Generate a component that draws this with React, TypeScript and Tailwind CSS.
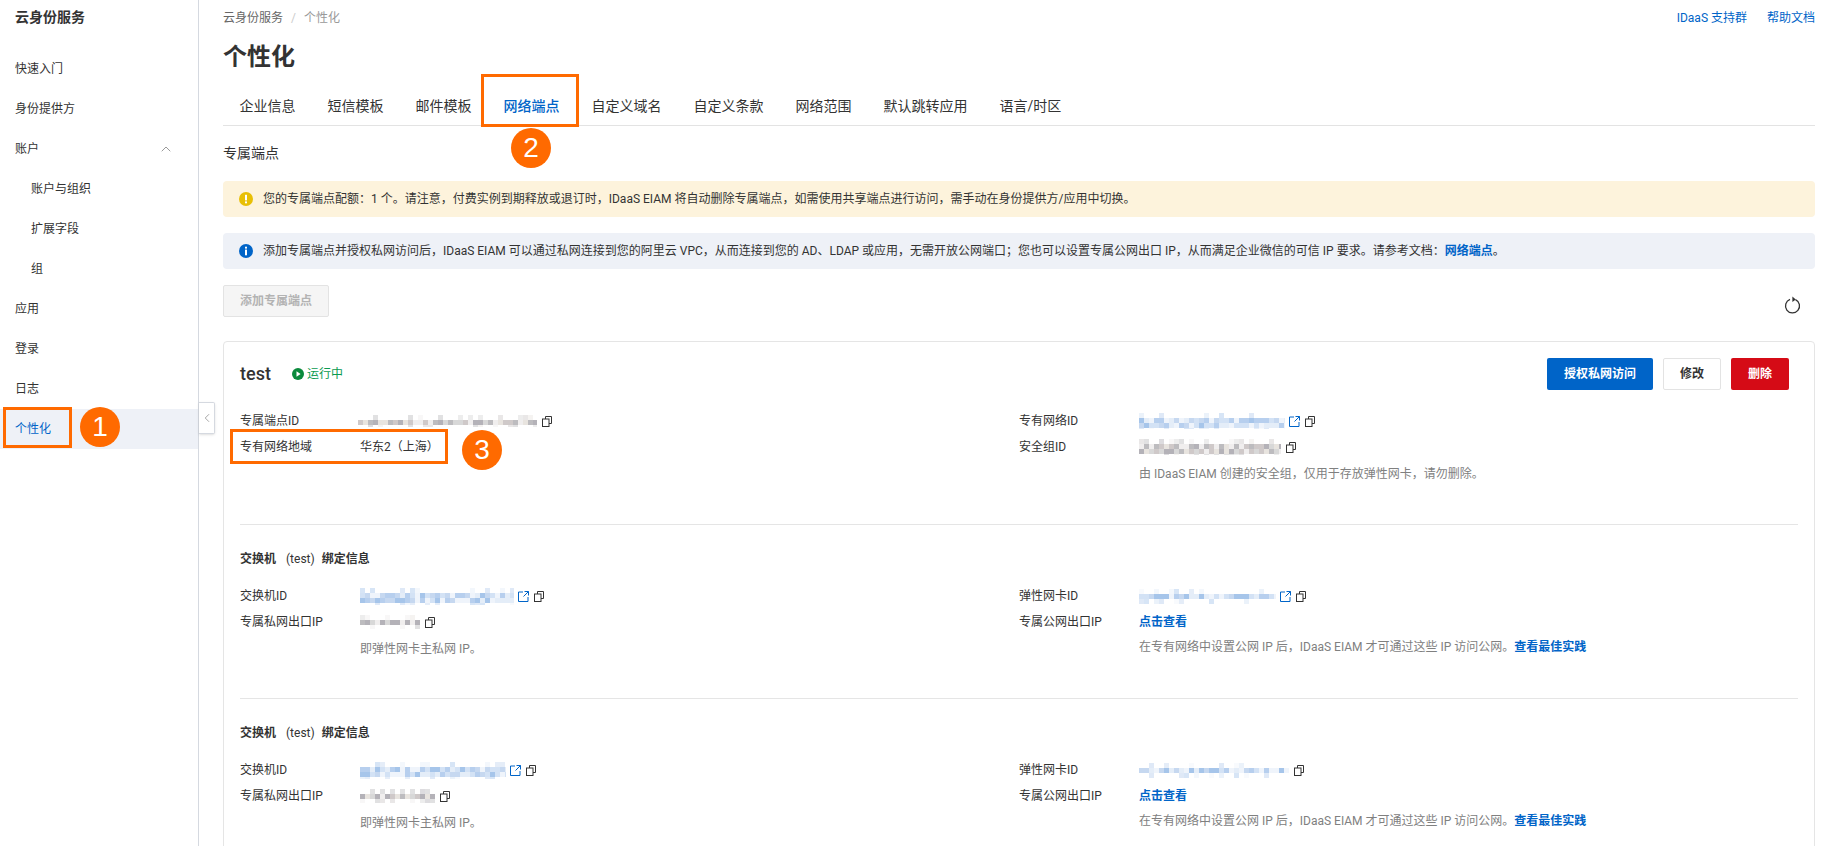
import type { ReactNode } from "react";
import { ChevronLeft, ChevronUp } from "lucide-react";

const navItems = [
  { label: "快速入门" },
  { label: "身份提供方" },
  { label: "账户", open: true },
  { label: "账户与组织", sub: true },
  { label: "扩展字段", sub: true },
  { label: "组", sub: true },
  { label: "应用" },
  { label: "登录" },
  { label: "日志" },
  { label: "个性化", active: true },
];

const tabs = ["企业信息", "短信模板", "邮件模板", "网络端点", "自定义域名", "自定义条款", "网络范围", "默认跳转应用", "语言/时区"];

const bluePalette = ["#d3e2f5", "#b7cfee", "#e4edf8", "#a6c5ea", "#eff4fb", "#c6d8f0"];
const grayPalette = ["#d8d8d8", "#bdbcbf", "#e8e4df", "#cfc9c9", "#f0eeee", "#b4b2b8"];

// stands in for the values that are pixelated in the screenshot
function Mosaic({ w, h = 15, seed, tone = "gray" }: { w: number; h?: number; seed: number; tone?: "gray" | "blue" }) {
  const palette = tone === "blue" ? bluePalette : grayPalette;
  const cell = 5;
  const rows = Math.ceil(h / cell);
  const cols = Math.ceil(w / cell);
  const rects = [];
  let s = seed * 7919 + 13;
  for (let r = 0; r < rows; r++) {
    for (let c = 0; c < cols; c++) {
      s = (s * 1103515245 + 12345) & 0x7fffffff;
      const edge = r === 0 || r === rows - 1;
      const skip = edge && (s >> 8) % 3 !== 0;
      if (skip) continue;
      rects.push(
        <rect
          key={`${r}-${c}`}
          x={c * cell}
          y={r * cell}
          width={cell}
          height={cell}
          fill={palette[(s >> 12) % palette.length]}
          opacity={edge ? 0.45 : 1}
        />,
      );
    }
  }
  return (
    <svg width={w} height={h} viewBox={`0 0 ${w} ${h}`} className="shrink-0">
      {rects}
    </svg>
  );
}

function CopyIcon() {
  return (
    <svg width="10" height="11" viewBox="0 0 10 11" fill="none" stroke="#333" strokeWidth="1" className="ml-[5px] shrink-0">
      <rect x="0.5" y="3" width="6.5" height="7.5" fill="#fff" />
      <path d="M3.5 3V0.5H9.5V7.5H7" />
    </svg>
  );
}

function LinkIcon() {
  return (
    <svg width="11" height="11" viewBox="0 0 11 11" fill="none" stroke="#0064c8" strokeWidth="1" className="ml-[4px] shrink-0">
      <path d="M5 1H0.5V10.5H10V6" />
      <path d="M6.5 0.5H10.5V4.5M10.5 0.5L5.5 5.5" />
    </svg>
  );
}

function AlertIcon({ kind }: { kind: "warn" | "info" }) {
  return (
    <svg width="14" height="14" viewBox="0 0 14 14" className="shrink-0">
      <circle cx="7" cy="7" r="7" fill={kind === "warn" ? "#e8bf05" : "#0064c8"} />
      {kind === "warn" ? (
        <>
          <rect x="6" y="2.8" width="2" height="5.6" fill="#fff" />
          <rect x="6" y="9.4" width="2" height="1.9" fill="#fff" />
        </>
      ) : (
        <>
          <rect x="6" y="2.7" width="2" height="1.9" fill="#fff" />
          <rect x="6" y="5.6" width="2" height="5.7" fill="#fff" />
        </>
      )}
    </svg>
  );
}

function Row({ label, children }: { label: string; children: ReactNode }) {
  return (
    <div className="flex h-[26px] items-center">
      <div className="w-[120px] shrink-0">{label}</div>
      <div className="flex items-center">{children}</div>
    </div>
  );
}

function Hint({ children }: { children: ReactNode }) {
  return <div className="ml-[120px] text-[#808080]">{children}</div>;
}

function SwitchBlock(props: {
  first: [number, number];
  ip: [number, number];
  eni: [number, number];
  eniLink?: boolean;
}) {
  return (
    <div className="border-t border-[#e5e5e5] pt-[24px]">
      <div className="flex h-5 items-center font-bold">
        <span>交换机</span>
        <span className="ml-[10px] font-normal">(test)</span>
        <span className="ml-[7px]">绑定信息</span>
      </div>
      <div className="mt-[14px] grid h-[115px] grid-cols-2">
        <div>
          <Row label="交换机ID">
            <Mosaic w={props.first[0]} h={17} seed={props.first[1]} tone="blue" />
            <LinkIcon />
            <CopyIcon />
          </Row>
          <Row label="专属私网出口IP">
            <Mosaic w={props.ip[0]} h={14} seed={props.ip[1]} />
            <CopyIcon />
          </Row>
          <div className="mt-[6px]">
            <Hint>即弹性网卡主私网 IP。</Hint>
          </div>
        </div>
        <div>
          <Row label="弹性网卡ID">
            <Mosaic w={props.eni[0]} h={15} seed={props.eni[1]} tone="blue" />
            {props.eniLink && <LinkIcon />}
            <CopyIcon />
          </Row>
          <Row label="专属公网出口IP">
            <span className="font-bold text-[#0064c8]">点击查看</span>
          </Row>
          <div className="mt-[4px]">
            <Hint>
              在专有网络中设置公网 IP 后，IDaaS EIAM 才可通过这些 IP 访问公网。
              <span className="font-bold text-[#0064c8]">查看最佳实践</span>
            </Hint>
          </div>
        </div>
      </div>
    </div>
  );
}

function Callout({ className, children }: { className: string; children?: ReactNode }) {
  return <div className={`absolute border-[3px] border-[#ff6a00] ${className}`}>{children}</div>;
}

function Badge({ n, className }: { n: number; className: string }) {
  return (
    <div
      className={`absolute flex h-10 w-10 items-center justify-center rounded-full bg-[#ff6a00] font-['Liberation_Sans',sans-serif] text-[28px] leading-none text-white ${className}`}
    >
      {n}
    </div>
  );
}

export default function App() {
  return (
    <div className="relative flex h-screen w-full overflow-hidden bg-white font-['Roboto','Noto_Sans_CJK_SC',sans-serif] text-xs text-[#333]">
      <aside className="w-[199px] shrink-0 border-r border-[#d5d9e0]">
        <div className="flex h-[34px] items-center pl-[15px] text-sm font-bold">云身份服务</div>
        <nav className="mt-[15px]">
          {navItems.map((item) => (
            <div
              key={item.label}
              className={`flex h-10 items-center justify-between pr-6 ${item.sub ? "pl-[31px]" : "pl-[15px]"} ${
                item.active ? "bg-[#eef1f7] text-[#0064c8]" : ""
              }`}
            >
              <span>{item.label}</span>
              {item.open && <ChevronUp size={16} strokeWidth={1.2} className="text-[#808080]" />}
            </div>
          ))}
        </nav>
      </aside>

      <main className="min-w-0 flex-1 pl-6 pr-2">
        <div className="flex h-9 items-center justify-between">
          <div className="flex items-center">
            <span className="text-[#666]">云身份服务</span>
            <span className="mx-[8px] text-[#ccc]">/</span>
            <span className="text-[#999]">个性化</span>
          </div>
          <div className="flex items-center gap-[20px] text-[#0064c8]">
            <span>IDaaS 支持群</span>
            <span>帮助文档</span>
          </div>
        </div>
        <h1 className="flex h-[42px] items-center text-2xl font-bold">个性化</h1>

        <div className="mt-2 flex h-10 border-b border-[#e3e3e3] pl-[0.5px]">
          {tabs.map((tab) => (
            <div
              key={tab}
              className={`flex items-center px-4 text-sm ${tab === "网络端点" ? "font-medium text-[#0064c8]" : ""}`}
            >
              {tab}
            </div>
          ))}
        </div>

        <div className="mt-4 flex h-[22px] items-center text-sm">专属端点</div>

        <div className="mt-[17px] flex h-9 items-center gap-[10px] rounded bg-[#fdf3dc] pl-4">
          <AlertIcon kind="warn" />
          <span>
            您的专属端点配额：1 个。请注意，付费实例到期释放或退订时，IDaaS EIAM 将自动删除专属端点，如需使用共享端点进行访问，需手动在身份提供方/应用中切换。
          </span>
        </div>
        <div className="mt-4 flex h-9 items-center gap-[10px] rounded bg-[#eef1f7] pl-4">
          <AlertIcon kind="info" />
          <span>
            添加专属端点并授权私网访问后，IDaaS EIAM 可以通过私网连接到您的阿里云 VPC，从而连接到您的 AD、LDAP 或应用，无需开放公网端口；您也可以设置专属公网出口 IP，从而满足企业微信的可信 IP 要求。请参考文档：
            <span className="font-bold text-[#0064c8]">网络端点</span>。
          </span>
        </div>

        <div className="mt-4 flex h-8 items-center justify-between">
          <div className="flex h-8 w-[106px] items-center justify-center rounded-[2px] border border-[#e3e3e3] bg-[#f5f5f5] font-bold text-[#b3b3b3]">
            添加专属端点
          </div>
          <svg width="18" height="18" viewBox="0 0 18 18" fill="none" stroke="#333" strokeWidth="1.3" className="mr-[13px] mt-2">
            <path d="M11.5 3.6A7 7 0 1 1 6 3.4" />
            <path d="M8.4 0.6L11.8 3.6L8.4 6" fill="#333" stroke="none" />
          </svg>
        </div>

        <section className="mt-6 rounded border border-[#e5e5e5] px-4 pt-4">
          <div className="flex h-8 items-center justify-between pr-[9px]">
            <div className="flex items-center">
              <span className="text-lg font-medium">test</span>
              <svg width="12" height="12" viewBox="0 0 12 12" className="ml-[21px] shrink-0">
                <circle cx="6" cy="6" r="6" fill="#0a8a3c" />
                <path d="M4.5 3.3L8.6 6L4.5 8.7Z" fill="#fff" />
              </svg>
              <span className="ml-[3px] text-[#0a9a50]">运行中</span>
            </div>
            <div className="flex items-center gap-[10px] font-bold">
              <div className="flex h-8 w-[106px] items-center justify-center rounded-[2px] bg-[#0064c8] text-white">授权私网访问</div>
              <div className="flex h-8 w-[58px] items-center justify-center rounded-[2px] border border-[#e3e3e3]">修改</div>
              <div className="flex h-8 w-[58px] items-center justify-center rounded-[2px] bg-[#d50b16] text-white">删除</div>
            </div>
          </div>

          <div className="mt-[18px] grid h-[116px] grid-cols-2">
            <div>
              <Row label="专属端点ID">
                <span className="-ml-[2px]">
                  <Mosaic w={179} h={12} seed={3} />
                </span>
                <CopyIcon />
              </Row>
              <Row label="专有网络地域">华东2（上海）</Row>
            </div>
            <div>
              <Row label="专有网络ID">
                <Mosaic w={146} h={16} seed={5} tone="blue" />
                <LinkIcon />
                <CopyIcon />
              </Row>
              <Row label="安全组ID">
                <Mosaic w={142} h={16} seed={8} />
                <CopyIcon />
              </Row>
              <div className="mt-[6px]">
                <Hint>由 IDaaS EIAM 创建的安全组，仅用于存放弹性网卡，请勿删除。</Hint>
              </div>
            </div>
          </div>

          <SwitchBlock first={[154, 11]} ip={[60, 14]} eni={[137, 17]} eniLink />
          <SwitchBlock first={[146, 21]} ip={[75, 23]} eni={[150, 29]} />
        </section>
      </main>

      {/* collapse handle on the sidebar edge */}
      <div className="absolute left-[199px] top-[402px] flex h-8 w-4 items-center justify-center rounded-r-[2px] border border-l-0 border-[#d5d9e0] bg-white shadow-sm">
        <ChevronLeft size={14} strokeWidth={1.5} className="text-[#999]" />
      </div>

      {/* orange annotations */}
      <Callout className="left-[3px] top-[407px] h-[41px] w-[69px]" />
      <Badge n={1} className="left-[80px] top-[407px]" />
      <Callout className="left-[481px] top-[74px] h-[53px] w-[98px]" />
      <Badge n={2} className="left-[511px] top-[128px]" />
      <Callout className="left-[230px] top-[429px] h-[35px] w-[218px]" />
      <Badge n={3} className="left-[462px] top-[430px]" />
    </div>
  );
}
